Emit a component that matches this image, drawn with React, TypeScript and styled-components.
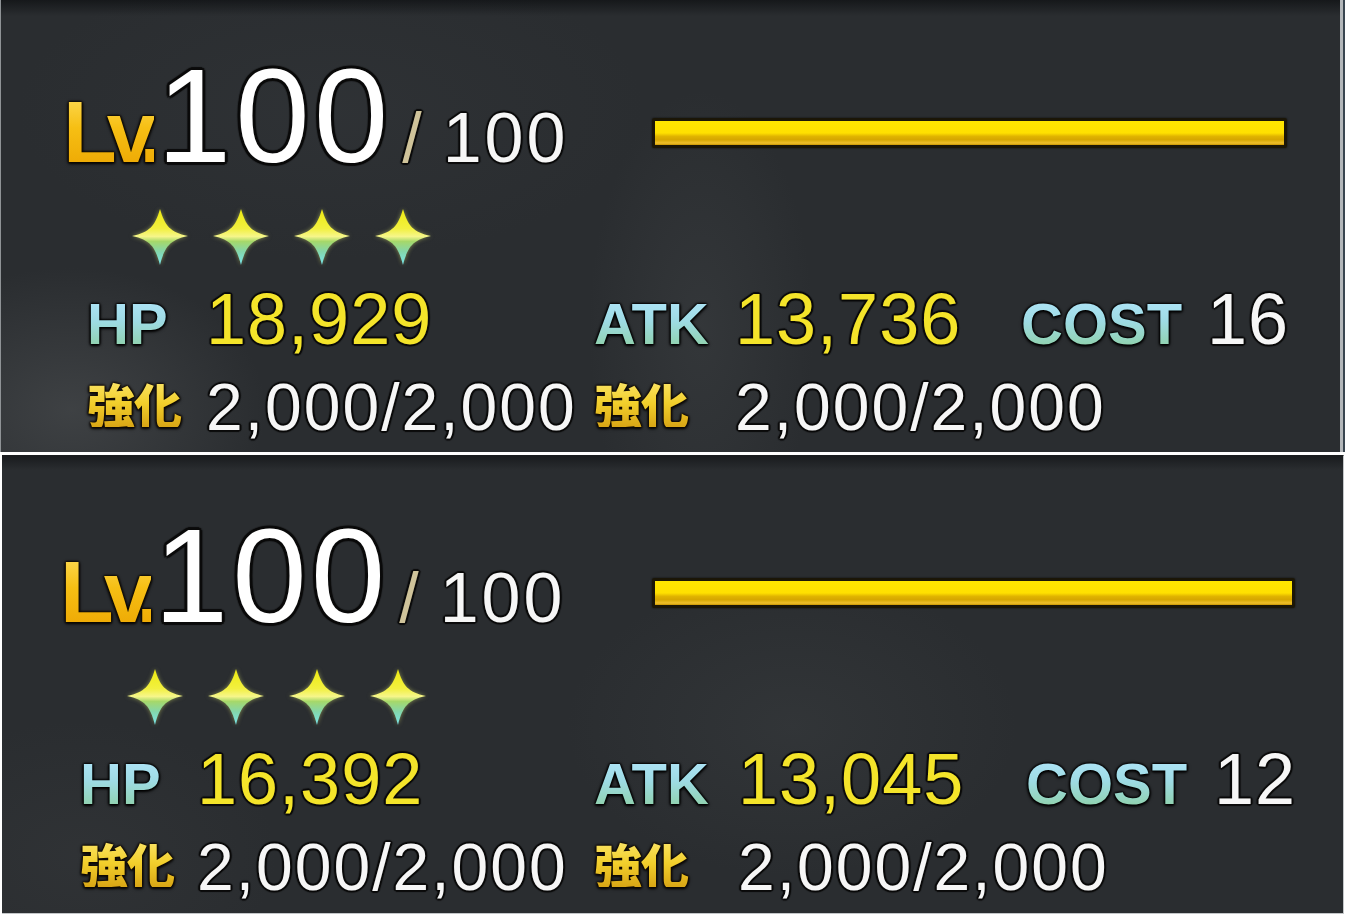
import React, { useId } from 'react';
import styled, { createGlobalStyle } from 'styled-components';

type Layout = {
  width: number;
  height: number;
  marginLeft: number;
  padTop: number;
  levelCol: number;
  levelLeft: number;
  barWidth: number;
  starsLeft: number;
  statsLeft: number;
  cols: string;
};

type UnitData = {
  id: string;
  level: string;
  max: string;
  hp: string;
  atk: string;
  cost: string;
  boostHp: [string, string];
  boostAtk: [string, string];
  first: boolean;
  layout: Layout;
};

const Global = createGlobalStyle`
  html, body { margin: 0; padding: 0; background: #ffffff; }
  body { font-family: "Liberation Sans", Arial, sans-serif; }
`;

const outline = (w: number, c = '#0a0a0a') =>
  `text-shadow: ${-w}px 0 1px ${c}, ${w}px 0 1px ${c}, 0 ${-w}px 1px ${c}, 0 ${w}px 1px ${c},
   ${-w * 0.7}px ${-w * 0.7}px 1px ${c}, ${w * 0.7}px ${-w * 0.7}px 1px ${c},
   ${-w * 0.7}px ${w * 0.7}px 1px ${c}, ${w * 0.7}px ${w * 0.7}px 1px ${c};`;

const Page = styled.main`
  width: 1372px;
  height: 917px;
  background: #ffffff;
  display: flex;
  flex-direction: column;
  gap: 3px;
`;

const Panel = styled.section<{ $l: Layout; $first: boolean }>`
  box-sizing: border-box;
  width: ${(p) => p.$l.width}px;
  height: ${(p) => p.$l.height}px;
  margin-left: ${(p) => p.$l.marginLeft}px;
  padding-top: ${(p) => p.$l.padTop}px;
  display: flex;
  flex-direction: column;
  overflow: hidden;
  ${(p) =>
    p.$first
      ? `border-left: 1px solid #8f9396;
         border-right: 3px solid #b3b7ba;
         box-shadow: 2px 0 0 #3a4650;
         background:
           linear-gradient(to bottom, rgba(8,10,12,0.6) 0px, rgba(8,10,12,0) 16px),
           radial-gradient(ellipse 260px 190px at 70px 410px, rgba(95,98,100,0.38), rgba(95,98,100,0) 75%),
           radial-gradient(ellipse 150px 320px at 700px 330px, rgba(82,86,88,0.24), rgba(82,86,88,0) 75%),
           radial-gradient(ellipse 420px 200px at 330px 110px, rgba(62,66,70,0.22), rgba(62,66,70,0) 75%),
           #2a2d30;`
      : `border-top: 1px solid #1a1c1e;
         border-right: 1px solid #c3c6c8;
         border-bottom: 1px solid #c3c6c8;
         background:
           linear-gradient(to bottom, rgba(8,10,12,0.5) 0px, rgba(8,10,12,0) 14px),
           radial-gradient(ellipse 300px 200px at 790px 270px, rgba(72,76,78,0.26), rgba(72,76,78,0) 75%),
           radial-gradient(ellipse 260px 180px at 80px 400px, rgba(70,72,74,0.2), rgba(70,72,74,0) 75%),
           #2a2d30;`}
`;

const LevelRow = styled.div<{ $l: Layout }>`
  display: grid;
  grid-template-columns: ${(p) => p.$l.levelCol}px ${(p) => p.$l.barWidth}px;
  align-items: start;
`;

const LevelGroup = styled.div<{ $left: number }>`
  display: flex;
  align-items: baseline;
  padding-left: ${(p) => p.$left}px;
  white-space: nowrap;
`;

const LvMark = styled.span`
  font-family: "Liberation Sans", Arial, sans-serif;
  font-weight: 700;
  font-size: 88px;
  line-height: 1;
  letter-spacing: -10px;
  color: transparent;
  background: linear-gradient(to bottom, #ffe060 0%, #f6bf14 45%, #eca400 100%);
  -webkit-background-clip: text;
  background-clip: text;
  filter: drop-shadow(0 0 1.2px #100a00) drop-shadow(0 0 1px #100a00) drop-shadow(0 1px 1px #000);
`;

const BigLevel = styled.span`
  font-family: "Liberation Sans", Arial, sans-serif;
  font-weight: 400;
  font-size: 134px;
  line-height: 1;
  letter-spacing: 4px;
  color: #ffffff;
  margin-left: 3px;
  ${outline(3)}
`;

const LevelSlash = styled.span`
  font-family: "Liberation Sans", Arial, sans-serif;
  font-size: 70px;
  line-height: 1;
  color: #cfc39a;
  margin-left: 10px;
  ${outline(2)}
`;

const MaxLevel = styled.span`
  font-family: "Liberation Sans", Arial, sans-serif;
  font-size: 70px;
  line-height: 1;
  letter-spacing: 3px;
  color: #f6f6f6;
  margin-left: 21px;
  ${outline(2)}
`;

const ExpBar = styled.div`
  box-sizing: border-box;
  margin-top: 69px;
  height: 30px;
  border: 3px solid #1b1607;
  border-radius: 2px;
  background: linear-gradient(
    to bottom,
    #ffe600 0%,
    #ffe000 50%,
    #e0b400 64%,
    #d6a600 78%,
    #efc02c 92%,
    #c99400 100%
  );
  box-shadow: 0 0 2px rgba(0, 0, 0, 0.8);
`;

const StarRow = styled.div<{ $left: number }>`
  display: flex;
  gap: 23px;
  margin-top: 25px;
  padding-left: ${(p) => p.$left}px;
`;

const StarSvg = styled.svg`
  width: 58px;
  height: 58px;
  flex: none;
  filter: blur(0.5px) drop-shadow(0 0 2px rgba(230, 240, 110, 0.5));
`;

const StatsGrid = styled.div<{ $l: Layout }>`
  display: grid;
  grid-template-columns: ${(p) => p.$l.cols};
  align-items: baseline;
  row-gap: 19px;
  margin-top: 17px;
  padding-left: ${(p) => p.$l.statsLeft}px;
  white-space: nowrap;
`;

const StatLabel = styled.span`
  font-family: "Liberation Sans", Arial, sans-serif;
  font-weight: 700;
  font-size: 58px;
  line-height: 1;
  color: transparent;
  background: linear-gradient(to bottom, #b2e6fb 0%, #9edbe4 45%, #8ccf9f 100%);
  -webkit-background-clip: text;
  background-clip: text;
  filter: drop-shadow(0 0 1.2px #000) drop-shadow(0 0 1px #000) drop-shadow(0 1px 1px #000);
`;

const StatValue = styled.span<{ $tone: 'yellow' | 'white' }>`
  font-family: "Liberation Sans", Arial, sans-serif;
  font-weight: 400;
  font-size: 72px;
  line-height: 1;
  letter-spacing: 1px;
  color: ${(p) => (p.$tone === 'yellow' ? '#f4e42a' : '#f6f6f6')};
  ${outline(2)}
`;

const BoostLabel = styled.span`
  align-self: start;
  margin-top: 5px;
  font-family: "Noto Sans CJK JP", "Noto Sans CJK SC", sans-serif;
  font-weight: 900;
  font-size: 48px;
  line-height: 1;
  letter-spacing: -1px;
  color: transparent;
  background: linear-gradient(to bottom, #fbe56a 0%, #f2cf2c 50%, #d9a615 100%);
  -webkit-background-clip: text;
  background-clip: text;
  filter: drop-shadow(0 0 1.2px #120a00) drop-shadow(0 0 1px #120a00) drop-shadow(0 1px 1px #000);
`;

const BoostValue = styled.span`
  font-family: "Liberation Sans", Arial, sans-serif;
  font-weight: 400;
  font-size: 66px;
  line-height: 1;
  letter-spacing: 2px;
  color: #f6f6f6;
  ${outline(2)}
`;

const Star: React.FC = () => {
  const gid = useId().replace(/:/g, '');
  return (
    <StarSvg viewBox="0 0 58 58" aria-hidden="true">
      <defs>
        <linearGradient id={`g${gid}`} x1="0" y1="0" x2="0" y2="1">
          <stop offset="0" stopColor="#eeea10" />
          <stop offset="0.35" stopColor="#f2f040" />
          <stop offset="0.49" stopColor="#f6f68a" />
          <stop offset="0.58" stopColor="#a6d86a" />
          <stop offset="0.76" stopColor="#84d6aa" />
          <stop offset="1" stopColor="#78e6f0" />
        </linearGradient>
      </defs>
      <path
        d="M29 1 C34 18, 39 24, 57 28 C39 32, 34 38, 29 57 C24 38, 19 32, 1 28 C19 24, 24 18, 29 1 Z"
        fill={`url(#g${gid})`}
      />
    </StarSvg>
  );
};

const UnitPanel: React.FC<{ d: UnitData }> = ({ d }) => {
  const l = d.layout;
  return (
    <Panel $l={l} $first={d.first}>
      <LevelRow $l={l}>
        <LevelGroup $left={l.levelLeft}>
          <LvMark>Lv.</LvMark>
          <BigLevel>{d.level}</BigLevel>
          <LevelSlash>/</LevelSlash>
          <MaxLevel>{d.max}</MaxLevel>
        </LevelGroup>
        <ExpBar />
      </LevelRow>
      <StarRow $left={l.starsLeft}>
        <Star />
        <Star />
        <Star />
        <Star />
      </StarRow>
      <StatsGrid $l={l}>
        <StatLabel>HP</StatLabel>
        <StatValue $tone="yellow">{d.hp}</StatValue>
        <StatLabel>ATK</StatLabel>
        <StatValue $tone="yellow">{d.atk}</StatValue>
        <StatLabel>COST</StatLabel>
        <StatValue $tone="white">{d.cost}</StatValue>
        <BoostLabel>強化</BoostLabel>
        <BoostValue>
          {d.boostHp[0]}/{d.boostHp[1]}
        </BoostValue>
        <BoostLabel>強化</BoostLabel>
        <BoostValue>
          {d.boostAtk[0]}/{d.boostAtk[1]}
        </BoostValue>
      </StatsGrid>
    </Panel>
  );
};

const units: UnitData[] = [
  {
    id: 'a',
    level: '100',
    max: '100',
    hp: '18,929',
    atk: '13,736',
    cost: '16',
    boostHp: ['2,000', '2,000'],
    boostAtk: ['2,000', '2,000'],
    first: true,
    layout: {
      width: 1343,
      height: 452,
      marginLeft: 0,
      padTop: 49,
      levelCol: 651,
      levelLeft: 62,
      barWidth: 635,
      starsLeft: 130,
      statsLeft: 86,
      cols: '119px 388px 141px 286px 186px auto',
    },
  },
  {
    id: 'b',
    level: '100',
    max: '100',
    hp: '16,392',
    atk: '13,045',
    cost: '12',
    boostHp: ['2,000', '2,000'],
    boostAtk: ['2,000', '2,000'],
    first: false,
    layout: {
      width: 1342,
      height: 459,
      marginLeft: 2,
      padTop: 53,
      levelCol: 650,
      levelLeft: 58,
      barWidth: 643,
      starsLeft: 124,
      statsLeft: 78,
      cols: '117px 397px 144px 288px 188px auto',
    },
  },
];

export default function App() {
  return (
    <>
      <Global />
      <Page>
        {units.map((u) => (
          <UnitPanel key={u.id} d={u} />
        ))}
      </Page>
    </>
  );
}
